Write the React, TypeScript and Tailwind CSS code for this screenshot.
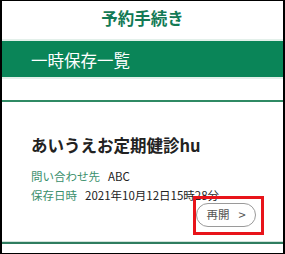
const jp = "font-['Noto_Sans_CJK_JP','Noto_Sans',sans-serif]";

export default function App() {
  return (
    <div
      className={`relative h-[254px] w-[285px] overflow-hidden border-b border-l-2 border-r-2 border-t border-black bg-white ${jp}`}
    >
      {/* ページ見出し */}
      <div className="flex h-[38px] items-center justify-center pb-[3px] text-[16.5px] font-bold text-[#137a55]">
        予約手続き
      </div>
      <div className="h-[2px] bg-[#e3f0ea]" />
      <div className="flex h-[36px] items-center bg-[#0a8558] pl-[29px] pt-[3px] text-[16.5px] text-white">
        一時保存一覧
      </div>
      <div className="h-[2px] bg-[#e3f0ea]" />

      <div className="mt-[21px] h-[2px] bg-[#2f8a64]" />

      {/* 保存済みの予約 */}
      <div className="pl-[29px] pr-[27px]">
        <h2 className="mt-[31px] text-[16.5px] font-bold leading-[24px] text-[#222]">
          あいうえお定期健診hu
        </h2>
        <dl className="mt-[10px] text-[11.5px] leading-[19px]">
          <div className="flex gap-[8px]">
            <dt className="text-[#3a8f6c]">問い合わせ先</dt>
            <dd className="text-[#222]">ABC</dd>
          </div>
          <div className="flex gap-[8px]">
            <dt className="text-[#3a8f6c]">保存日時</dt>
            <dd className="text-[#222]">2021年10月12日15時28分</dd>
          </div>
        </dl>
        <div className="-mt-[2px] flex justify-end">
          <button className="flex h-[24px] w-[60px] items-center justify-center gap-[9px] rounded-full border border-[#9a9a9a] bg-white text-[11.5px] text-[#555]">
            <span>再開</span>
            <span className="text-[13px]">&gt;</span>
          </button>
        </div>
      </div>

      <div className="mt-[14px] h-px bg-[#cfe3da]" />
      <div className="h-[2px] bg-[#2f7d60]" />

      {/* 注釈の赤枠 */}
      <div className="absolute left-[191px] top-[195px] h-[39px] w-[71px] border-[3px] border-[#e8141a]" />
    </div>
  );
}
